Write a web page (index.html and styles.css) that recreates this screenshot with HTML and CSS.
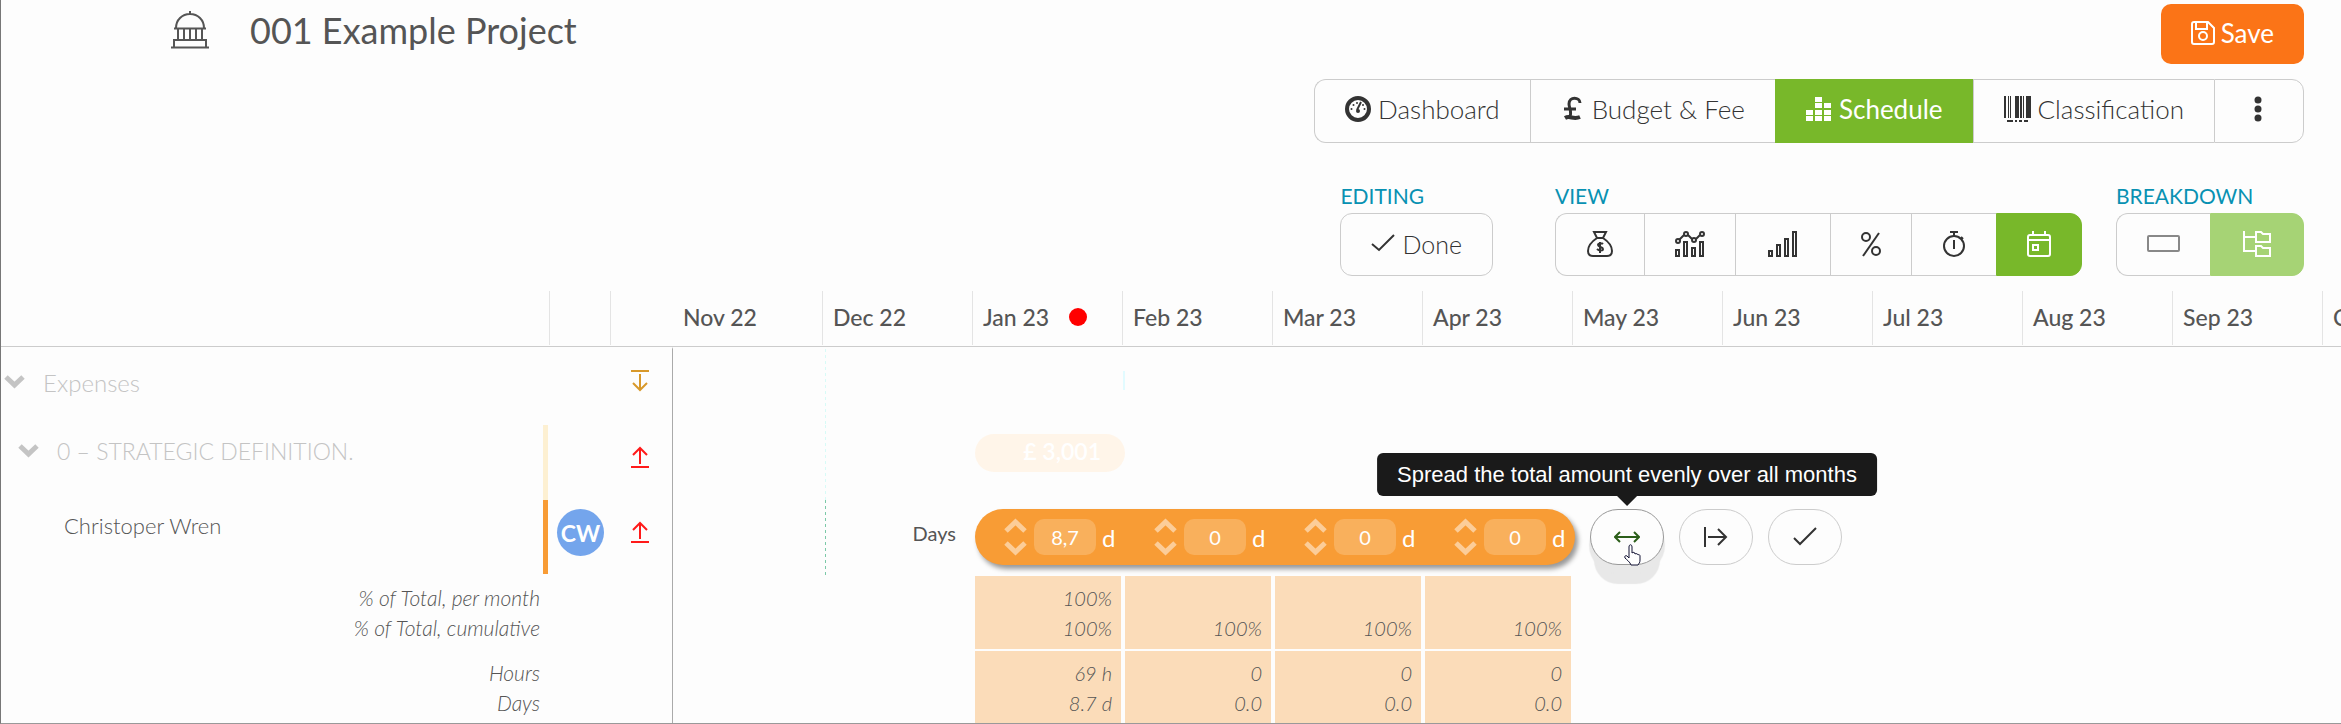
FILE: index.html
```html
<!DOCTYPE html>
<html lang="en">
    <head>
        <meta charset="utf-8">
        <title>001 Example Project</title>
        <link rel="stylesheet" href="styles.css">
    </head>
    <body>
        <div class="app">
            <header class="topbar">
                <div class="project">
                    <svg class="project-icon" width="38" height="38" viewBox="0 0 38 38" fill="none" stroke="currentColor" stroke-width="2">
                        <path d="M19 0v4M5 17C5 9 11 3 19 3s14 6 14 14M3 17.500h32M7 18v11M13 18v11M19 18v11M25 18v11M31 18v11M3 36v-7h32v7M0 36.500h38"/>
                    </svg>
                    <h1>001 Example Project</h1>
                </div>
                <button class="save">
                    <svg width="24" height="24" viewBox="0 0 24 24" fill="none" stroke="currentColor" stroke-width="2">
                        <path d="M3 1h14l6 6v14a2 2 0 0 1-2 2H3a2 2 0 0 1-2-2V3a2 2 0 0 1 2-2zM5 1v7h11V1"/>
                        <circle cx="12" cy="15" r="4"/>
                    </svg>
                    Save
                </button>
            </header>

            <nav class="group tabs">
                <button class="item">
                    <svg width="26" height="26" viewBox="0 0 26 26">
                        <circle cx="13" cy="13" r="11" fill="none" stroke="currentColor" stroke-width="4"/>
                        <path d="M12 14l4-8" stroke="currentColor" stroke-width="2"/>
                        <circle cx="13" cy="15" r="2" fill="currentColor"/>
                        <g fill="currentColor"><circle cx="6.500" cy="13" r="1"/><circle cx="8.500" cy="9" r="1"/><circle cx="12" cy="7" r="1"/><circle cx="18" cy="9" r="1"/><circle cx="19.500" cy="13" r="1"/></g>
                    </svg>
                    Dashboard
                </button>
                <button class="item">
                    <svg width="24" height="26" viewBox="-2 0 24 26" fill="none" stroke="currentColor" stroke-width="3">
                        <path d="M17 7C17 1 6 0 6 8c0 4 4 9 0 14M1 13h12"/>
                        <path d="M2 22c5-3 8 2 15-1" stroke-width="4"/>
                    </svg>
                    Budget &amp; Fee
                </button>
                <button class="item active">
                    <svg width="26" height="26" viewBox="0 0 26 26" fill="currentColor">
                        <path d="M9 1h7v5H9zM9 7h7v5H9zM18 7h7v5h-7zM0 14h7v5H0zM9 14h7v5H9zM18 14h7v5h-7zM0 20h7v5H0zM9 20h7v5H9zM18 20h7v5h-7z"/>
                    </svg>
                    Schedule
                </button>
                <button class="item">
                    <svg width="27" height="26" viewBox="0 0 27 26" fill="currentColor">
                        <path d="M0 0h2v22H0zM4 0h1v22H4zM6 0h1v22H6zM11 0h4v22h-4zM16 0h2v22h-2zM19 0h1v22h-1zM22 0h5v22h-5zM3 24h6v2H3zM11 24h2v2h-2zM15 24h3v2h-3zM20 24h4v2h-4z"/>
                    </svg>
                    Classification
                </button>
                <button class="item" aria-label="More">
                    <svg width="28" height="26" viewBox="0 0 28 26" fill="currentColor">
                        <circle cx="13" cy="4" r="3.500"/><circle cx="13" cy="13" r="3.500"/><circle cx="13" cy="22" r="3.500"/>
                    </svg>
                </button>
            </nav>

            <div class="tools">
                <section>
                    <h2>EDITING</h2>
                    <div class="group">
                        <button class="item">
                            <svg width="24" height="24" viewBox="0 0 24 24" fill="none" stroke="currentColor" stroke-width="2"><path d="M1 12l7 6L23 3"/></svg>
                            Done
                        </button>
                    </div>
                </section>
                <section>
                    <h2>VIEW</h2>
                    <div class="group">
                        <button class="item" aria-label="Money">
                            <svg width="28" height="26" viewBox="-1 0 28 26" fill="none" stroke="currentColor" stroke-width="2">
                                <path d="M7 1h12l-3 6h-6zM10 7C4 11 1 16 1 20c0 4 2 5 5 5h14c3 0 5-1 5-5 0-4-3-9-9-13"/>
                                <path d="M16 13c-1-1-5-1-5 1s5 2 5 4-4 2-6 0M13 11v11"/>
                            </svg>
                        </button>
                        <button class="item" aria-label="Chart">
                            <svg width="30" height="26" viewBox="0 0 30 26" fill="none" stroke="currentColor" stroke-width="2">
                                <path d="M1 19h3v6H1zM9 11h3v14H9zM17 17h3v8h-3zM25 11h3v14h-3zM4 9l5-5M13 4l4 4M21 8l4-4"/>
                                <circle cx="3" cy="10" r="2"/><circle cx="11" cy="3" r="2"/><circle cx="19" cy="9" r="2"/><circle cx="27" cy="3" r="2"/>
                            </svg>
                        </button>
                        <button class="item" aria-label="Bars">
                            <svg width="34" height="26" viewBox="-2 0 34 26" fill="none" stroke="currentColor" stroke-width="2">
                                <path d="M1 20h3v5H1zM9 14h3v11H9zM17 8h3v17h-3zM25 1h3v24h-3z"/>
                            </svg>
                        </button>
                        <button class="item" aria-label="Percent">
                            <svg width="20" height="26" viewBox="0 0 20 26" fill="none" stroke="currentColor" stroke-width="2">
                                <path d="M18 2L2 25"/><circle cx="5" cy="6" r="4"/><circle cx="15" cy="20" r="4"/>
                            </svg>
                        </button>
                        <button class="item" aria-label="Time">
                            <svg width="24" height="26" viewBox="0 0 24 26" fill="none" stroke="currentColor" stroke-width="2">
                                <circle cx="12" cy="15" r="10"/><path d="M8 1h8M12 1v4M12 9v9M19 6l2 2"/>
                            </svg>
                        </button>
                        <button class="item active" aria-label="Calendar">
                            <svg width="24" height="26" viewBox="0 0 24 26" fill="none" stroke="currentColor" stroke-width="2">
                                <path d="M3 4h18a2 2 0 0 1 2 2v17a2 2 0 0 1-2 2H3a2 2 0 0 1-2-2V6a2 2 0 0 1 2-2zM1 9h22M6 0v4M18 0v4M6 14h5v5H6z"/>
                            </svg>
                        </button>
                    </div>
                </section>
                <section>
                    <h2>BREAKDOWN</h2>
                    <div class="group">
                        <button class="item faded" aria-label="Flat">
                            <svg width="33" height="26" viewBox="0 0 33 26" fill="none" stroke="currentColor" stroke-width="2"><rect x="1" y="5" width="31" height="15" rx="1"/></svg>
                        </button>
                        <button class="item active faded" aria-label="Tree">
                            <svg width="32" height="26" viewBox="-2 0 32 26" fill="none" stroke="currentColor" stroke-width="2">
                                <path d="M1 0v20h11M1 6h11M13 1h5l2 2h7v8H13zM13 15h5l2 2h7v8H13z"/>
                            </svg>
                        </button>
                    </div>
                </section>
            </div>

            <table class="schedule">
                <colgroup>
                    <col class="col-name"><col class="col-user"><col class="col-move">
                    <col><col><col><col><col><col><col><col><col><col><col><col>
                </colgroup>
                <thead>
                    <tr>
                        <th><div></div></th><th><div></div></th><th class="plain"><div></div></th>
                        <th><div>Nov 22</div></th>
                        <th><div>Dec 22</div></th>
                        <th><div>Jan 23<span class="today"></span></div></th>
                        <th><div>Feb 23</div></th>
                        <th><div>Mar 23</div></th>
                        <th><div>Apr 23</div></th>
                        <th><div>May 23</div></th>
                        <th><div>Jun 23</div></th>
                        <th><div>Jul 23</div></th>
                        <th><div>Aug 23</div></th>
                        <th><div>Sep 23</div></th>
                        <th><div>Oct 23</div></th>
                    </tr>
                </thead>
                <tbody>
                    <tr class="muted">
                        <td class="name">
                            <svg width="21" height="14" viewBox="0 0 21 14" fill="none" stroke="currentColor" stroke-width="5"><path d="M2 2l8.500 8L19 2"/></svg>
                            Expenses
                        </td>
                        <td></td>
                        <td class="move down">
                            <svg width="18" height="22" viewBox="0 0 18 22" fill="none" stroke="currentColor" stroke-width="2"><path d="M0 1h18M9 4v16M2 13l7 7 7-7"/></svg>
                        </td>
                        <td></td>
                        <td class="start"></td>
                        <td></td>
                        <td class="tick" colspan="9"><div></div></td>
                    </tr>
                    <tr class="muted">
                        <td class="name phase">
                            <svg width="21" height="14" viewBox="0 0 21 14" fill="none" stroke="currentColor" stroke-width="5"><path d="M2 2l8.500 8L19 2"/></svg>
                            0 – STRATEGIC DEFINITION.
                        </td>
                        <td></td>
                        <td class="move">
                            <svg width="18" height="22" viewBox="0 0 18 22" fill="none" stroke="currentColor" stroke-width="2"><path d="M0 21h18M9 18V2M2 9l7-7 7 7"/></svg>
                        </td>
                        <td></td>
                        <td class="start"></td>
                        <td class="total"><div>£ 3,001</div></td>
                        <td colspan="9"></td>
                    </tr>
                    <tr>
                        <td class="name person">Christoper Wren</td>
                        <td class="user"><span class="avatar">CW</span></td>
                        <td class="move">
                            <svg width="18" height="22" viewBox="0 0 18 22" fill="none" stroke="currentColor" stroke-width="2"><path d="M0 21h18M9 18V2M2 9l7-7 7 7"/></svg>
                        </td>
                        <td></td>
                        <td class="start unit">Days</td>
                        <td class="editor" colspan="10">
                            <div class="editor-row">
                                <div class="pill">
                                    <div class="month">
                                        <div class="spin">
                                            <button aria-label="Increase January"><svg width="23" height="15" viewBox="0 0 23 15"><path d="M2 13l9.500-9L21 13"/></svg></button>
                                            <button aria-label="Decrease January"><svg width="23" height="15" viewBox="0 0 23 15"><path d="M2 2l9.500 9L21 2"/></svg></button>
                                        </div>
                                        <label><input type="text" value="8,7" aria-label="Days in January">d</label>
                                    </div>
                                    <div class="month">
                                        <div class="spin">
                                            <button aria-label="Increase February"><svg width="23" height="15" viewBox="0 0 23 15"><path d="M2 13l9.500-9L21 13"/></svg></button>
                                            <button aria-label="Decrease February"><svg width="23" height="15" viewBox="0 0 23 15"><path d="M2 2l9.500 9L21 2"/></svg></button>
                                        </div>
                                        <label><input type="text" value="0" aria-label="Days in February">d</label>
                                    </div>
                                    <div class="month">
                                        <div class="spin">
                                            <button aria-label="Increase March"><svg width="23" height="15" viewBox="0 0 23 15"><path d="M2 13l9.500-9L21 13"/></svg></button>
                                            <button aria-label="Decrease March"><svg width="23" height="15" viewBox="0 0 23 15"><path d="M2 2l9.500 9L21 2"/></svg></button>
                                        </div>
                                        <label><input type="text" value="0" aria-label="Days in March">d</label>
                                    </div>
                                    <div class="month">
                                        <div class="spin">
                                            <button aria-label="Increase April"><svg width="23" height="15" viewBox="0 0 23 15"><path d="M2 13l9.500-9L21 13"/></svg></button>
                                            <button aria-label="Decrease April"><svg width="23" height="15" viewBox="0 0 23 15"><path d="M2 2l9.500 9L21 2"/></svg></button>
                                        </div>
                                        <label><input type="text" value="0" aria-label="Days in April">d</label>
                                    </div>
                                </div>
                                <button class="round hovered" aria-labelledby="spread-tip">
                                    <svg width="26" height="20" viewBox="0 0 26 20"><path d="M1 10h24M6 5l-5 5 5 5M20 5l5 5-5 5"/></svg>
                                    <svg class="cursor" width="18" height="22" viewBox="0 0 18 22"><path d="M6 14V3c0-3 3-3 3 0v6c1-1 3-1 3 1 1-1 3 0 3 1 1-1 2 0 2 1v4c0 3-1 3-2 5H8c-1-3-4-5-6-7-1-2 1-3 2-2z"/></svg>
                                    <span class="tooltip" id="spread-tip">Spread the total amount evenly over all months</span>
                                </button>
                                <button class="round" aria-label="Move the amount forward">
                                    <svg width="24" height="20" viewBox="0 0 24 20"><path d="M1 0v20M4 10h18M14 2l8 8-8 8"/></svg>
                                </button>
                                <button class="round" aria-label="Accept">
                                    <svg width="24" height="20" viewBox="0 0 24 20"><path d="M1 11l6 6L23 1"/></svg>
                                </button>
                            </div>
                        </td>
                    </tr>
                    <tr class="figures">
                        <th scope="row">% of Total, per month<br>% of Total, cumulative</th>
                        <td></td>
                        <td class="move"></td>
                        <td></td>
                        <td></td>
                        <td class="value"><div>100%<br>100%</div></td>
                        <td class="value"><div><br>100%</div></td>
                        <td class="value"><div><br>100%</div></td>
                        <td class="value"><div><br>100%</div></td>
                        <td colspan="6"></td>
                    </tr>
                    <tr class="figures">
                        <th scope="row">Hours<br>Days</th>
                        <td></td>
                        <td class="move"></td>
                        <td></td>
                        <td></td>
                        <td class="value"><div>69 h<br>8.7 d</div></td>
                        <td class="value"><div>0<br>0.0</div></td>
                        <td class="value"><div>0<br>0.0</div></td>
                        <td class="value"><div>0<br>0.0</div></td>
                        <td colspan="6"></td>
                    </tr>
                </tbody>
            </table>
        </div>
    </body>
</html>
```
FILE: styles.css
```css
* {
    box-sizing: border-box;
}
body {
    margin: 0;
    background-color: #fdfdfd;
    color: #555;
    font-family: Lato, "Open Sans", sans-serif;
    font-size: 20px;
}
button {
    font: inherit;
    color: inherit;
    background: none;
    border: none;
    padding: 0;
    cursor: pointer;
}
svg {
    display: block;
    flex: none;
}
.app {
    display: flex;
    flex-direction: column;
    height: 100vh;
    overflow: hidden;
    padding-top: 4px;
    border-left: 1px solid #777;
    border-bottom: 1px solid #999;
}
.app > * {
    flex: none;
}
.topbar {
    display: flex;
    justify-content: space-between;
    align-items: flex-start;
    padding: 0 37px 0 170px;
    margin-bottom: 15px;
}
.project {
    display: flex;
    align-items: center;
    gap: 41px;
    height: 52px;
}
.project h1 {
    margin: 0;
    font-size: 36px;
    font-weight: 400;
}
.save {
    display: flex;
    align-items: center;
    gap: 6px;
    height: 60px;
    padding: 0 30px 2px;
    border-radius: 10px;
    background-color: #fb7417;
    color: #fff;
    font-size: 26px;
}
.group {
    display: flex;
    height: 63px;
    color: #333;
    font-size: 25px;
    font-weight: 300;
}
.tabs {
    align-self: flex-end;
    height: 64px;
    margin-right: 37px;
    font-size: 26px;
}
.item {
    display: flex;
    align-items: center;
    gap: 7px;
    padding: 0 30px 2px;
    border: solid #ccc;
    border-width: 1px 0 1px 1px;
}
.tabs .item {
    padding-bottom: 4px;
}
.item:first-child {
    border-radius: 12px 0 0 12px;
}
.item:last-child {
    border-right-width: 1px;
    border-radius: 0 12px 12px 0;
}
.item:only-child {
    border-radius: 12px;
}
.item.active {
    background-color: #78b82a;
    border-color: #78b82a;
    color: #fff;
    font-weight: 400;
}
.item.faded {
    color: #888;
}
.item.active.faded {
    background-color: #a6d375;
    border-color: #a6d375;
    color: #fff;
}
.tools {
    display: flex;
    justify-content: flex-end;
    margin: 38px 37px 15px 0;
}
.tools section + section {
    margin-left: 62px;
}
.tools section:last-child {
    margin-left: 34px;
}
.tools h2 {
    margin: 0 0 2px;
    font-size: 21px;
    font-weight: 400;
    line-height: 30px;
    color: #0891b2;
}

.schedule {
    table-layout: fixed;
    width: 2472px;
    border-collapse: separate;
    border-spacing: 0;
}
.schedule .col-name {
    width: 549px;
}
.schedule .col-user {
    width: 61px;
}
.schedule .col-move {
    width: 62px;
}
.schedule th,
.schedule td {
    padding: 0;
    vertical-align: top;
}
.schedule thead th {
    height: 56px;
    border-bottom: 1px solid #ccc;
}
.schedule thead div {
    display: flex;
    align-items: center;
    height: 54px;
    padding: 0 0 2px 10px;
    border-right: 1px solid #e4e4e4;
    font-size: 23px;
    font-weight: 500;
}
.schedule thead .plain div {
    border-right: none;
}
.today {
    width: 18px;
    height: 18px;
    margin-left: 20px;
    border-radius: 50%;
    background-color: #f00;
}
.schedule tbody tr {
    height: 75px;
}
.schedule tbody tr:first-child {
    height: 78px;
}
.schedule tbody tr:first-child td {
    border-top: 2px solid #fdfdfd;
}
.name {
    font-size: 20px;
    font-weight: 300;
}
.muted .name {
    display: flex;
    align-items: center;
    gap: 18px;
    height: 68px;
    padding-left: 3px;
    font-size: 24px;
    color: #c4c4c4;
}
.muted .phase {
    height: 52px;
    padding-left: 17px;
    font-size: 23px;
}
.schedule .person {
    padding: 12px 0 0 63px;
    font-size: 22px;
}
.user,
.phase {
    position: relative;
}
/* coloured strip left of the user column */
.user::before,
.phase::after {
    content: "";
    position: absolute;
    left: -7px;
    top: 0;
    width: 5px;
    height: 74px;
    background-color: #f89c35;
}
.phase::after {
    left: 542px;
    height: 75px;
    background-color: #fdf0d2;
}
.avatar {
    display: flex;
    align-items: center;
    justify-content: center;
    width: 47px;
    height: 47px;
    margin: 9px 0 0 7px;
    border-radius: 50%;
    background-color: #74a5ec;
    color: #fff;
    font-size: 23px;
    font-weight: 700;
}
.schedule .move {
    padding: 21px 0 0 20px;
    border-right: 1px solid #aaa;
    color: #ff1a1a;
}
.schedule .down {
    color: #d8992b;
}
.start {
    background: linear-gradient(to bottom, #d8fbf7 50%, transparent 50%) 2px 0 / 1px 6px repeat-y;
}
.schedule .unit {
    padding: 21px 17px 0 0;
    background-image: linear-gradient(to bottom, #7cc9a8 50%, transparent 50%);
    text-align: right;
}
.tick div {
    width: 2px;
    height: 19px;
    margin-top: 22px;
    background-color: #e2fbff;
}
.total div {
    width: 150px;
    height: 38px;
    margin: 9px 0 0 2px;
    padding-right: 24px;
    border-radius: 19px;
    background-color: #fff5e9;
    color: #fff;
    font-size: 23px;
    font-weight: 600;
    line-height: 34px;
    text-align: right;
}
.editor-row {
    display: flex;
    align-items: center;
    gap: 15px;
    padding: 9px 0 0 2px;
}
.pill {
    display: flex;
    width: 600px;
    height: 56px;
    border-radius: 28px;
    background-color: #f89c35;
    box-shadow: 3px 4px 5px rgba(0, 0, 0, 0.4);
    color: #fff;
}
.month {
    display: flex;
    align-items: center;
    gap: 7px;
    width: 150px;
    padding-left: 29px;
}
.spin {
    display: flex;
    flex-direction: column;
    gap: 8px;
}
.spin path {
    fill: none;
    stroke: #fccd98;
    stroke-width: 5;
}
.month label {
    display: flex;
    align-items: center;
    gap: 6px;
    font-size: 24px;
}
.month input {
    width: 62px;
    height: 36px;
    padding: 0;
    border: none;
    border-radius: 10px;
    background-color: #f9b05c;
    color: #fff;
    font: 400 20px Lato, sans-serif;
    text-align: center;
}
.round {
    position: relative;
    display: flex;
    align-items: center;
    justify-content: center;
    width: 74px;
    height: 56px;
    border: 1px solid #ccc;
    border-radius: 28px;
    background-color: #fdfdfd;
    color: #333;
}
.round path {
    fill: none;
    stroke: currentColor;
    stroke-width: 2;
}
.hovered {
    border-color: #999;
    box-shadow: 0 8px 1px 1px #e8e8e8, 0 23px 1px -4px #e8e8e8;
    color: #2c5e1a;
}
.cursor {
    position: absolute;
    left: 32px;
    top: 34px;
}
.round .cursor path {
    fill: #fff;
    stroke: #113;
    stroke-width: 1;
}
.tooltip {
    position: absolute;
    bottom: 68px;
    left: 50%;
    transform: translateX(-50%);
    padding: 0 20px;
    border-radius: 6px;
    background-color: #1a1a1a;
    color: #fff;
    font-family: "Liberation Sans", Arial, sans-serif;
    font-size: 22px;
    line-height: 43px;
    white-space: nowrap;
}
.tooltip::after {
    content: "";
    position: absolute;
    top: 100%;
    left: 50%;
    margin-left: -10px;
    border: 10px solid transparent;
    border-top-color: #1a1a1a;
    border-bottom: none;
}
.figures th,
.value {
    font-size: 20px;
    font-style: italic;
    font-weight: 300;
    line-height: 30px;
    text-align: right;
}
.schedule .figures th {
    padding: 8px 10px 0 0;
    font-size: 21px;
}
.value div {
    height: 73px;
    margin: 1px 2px 0;
    padding: 7px 9px 0 0;
    background-color: #fbdcb9;
}
```
